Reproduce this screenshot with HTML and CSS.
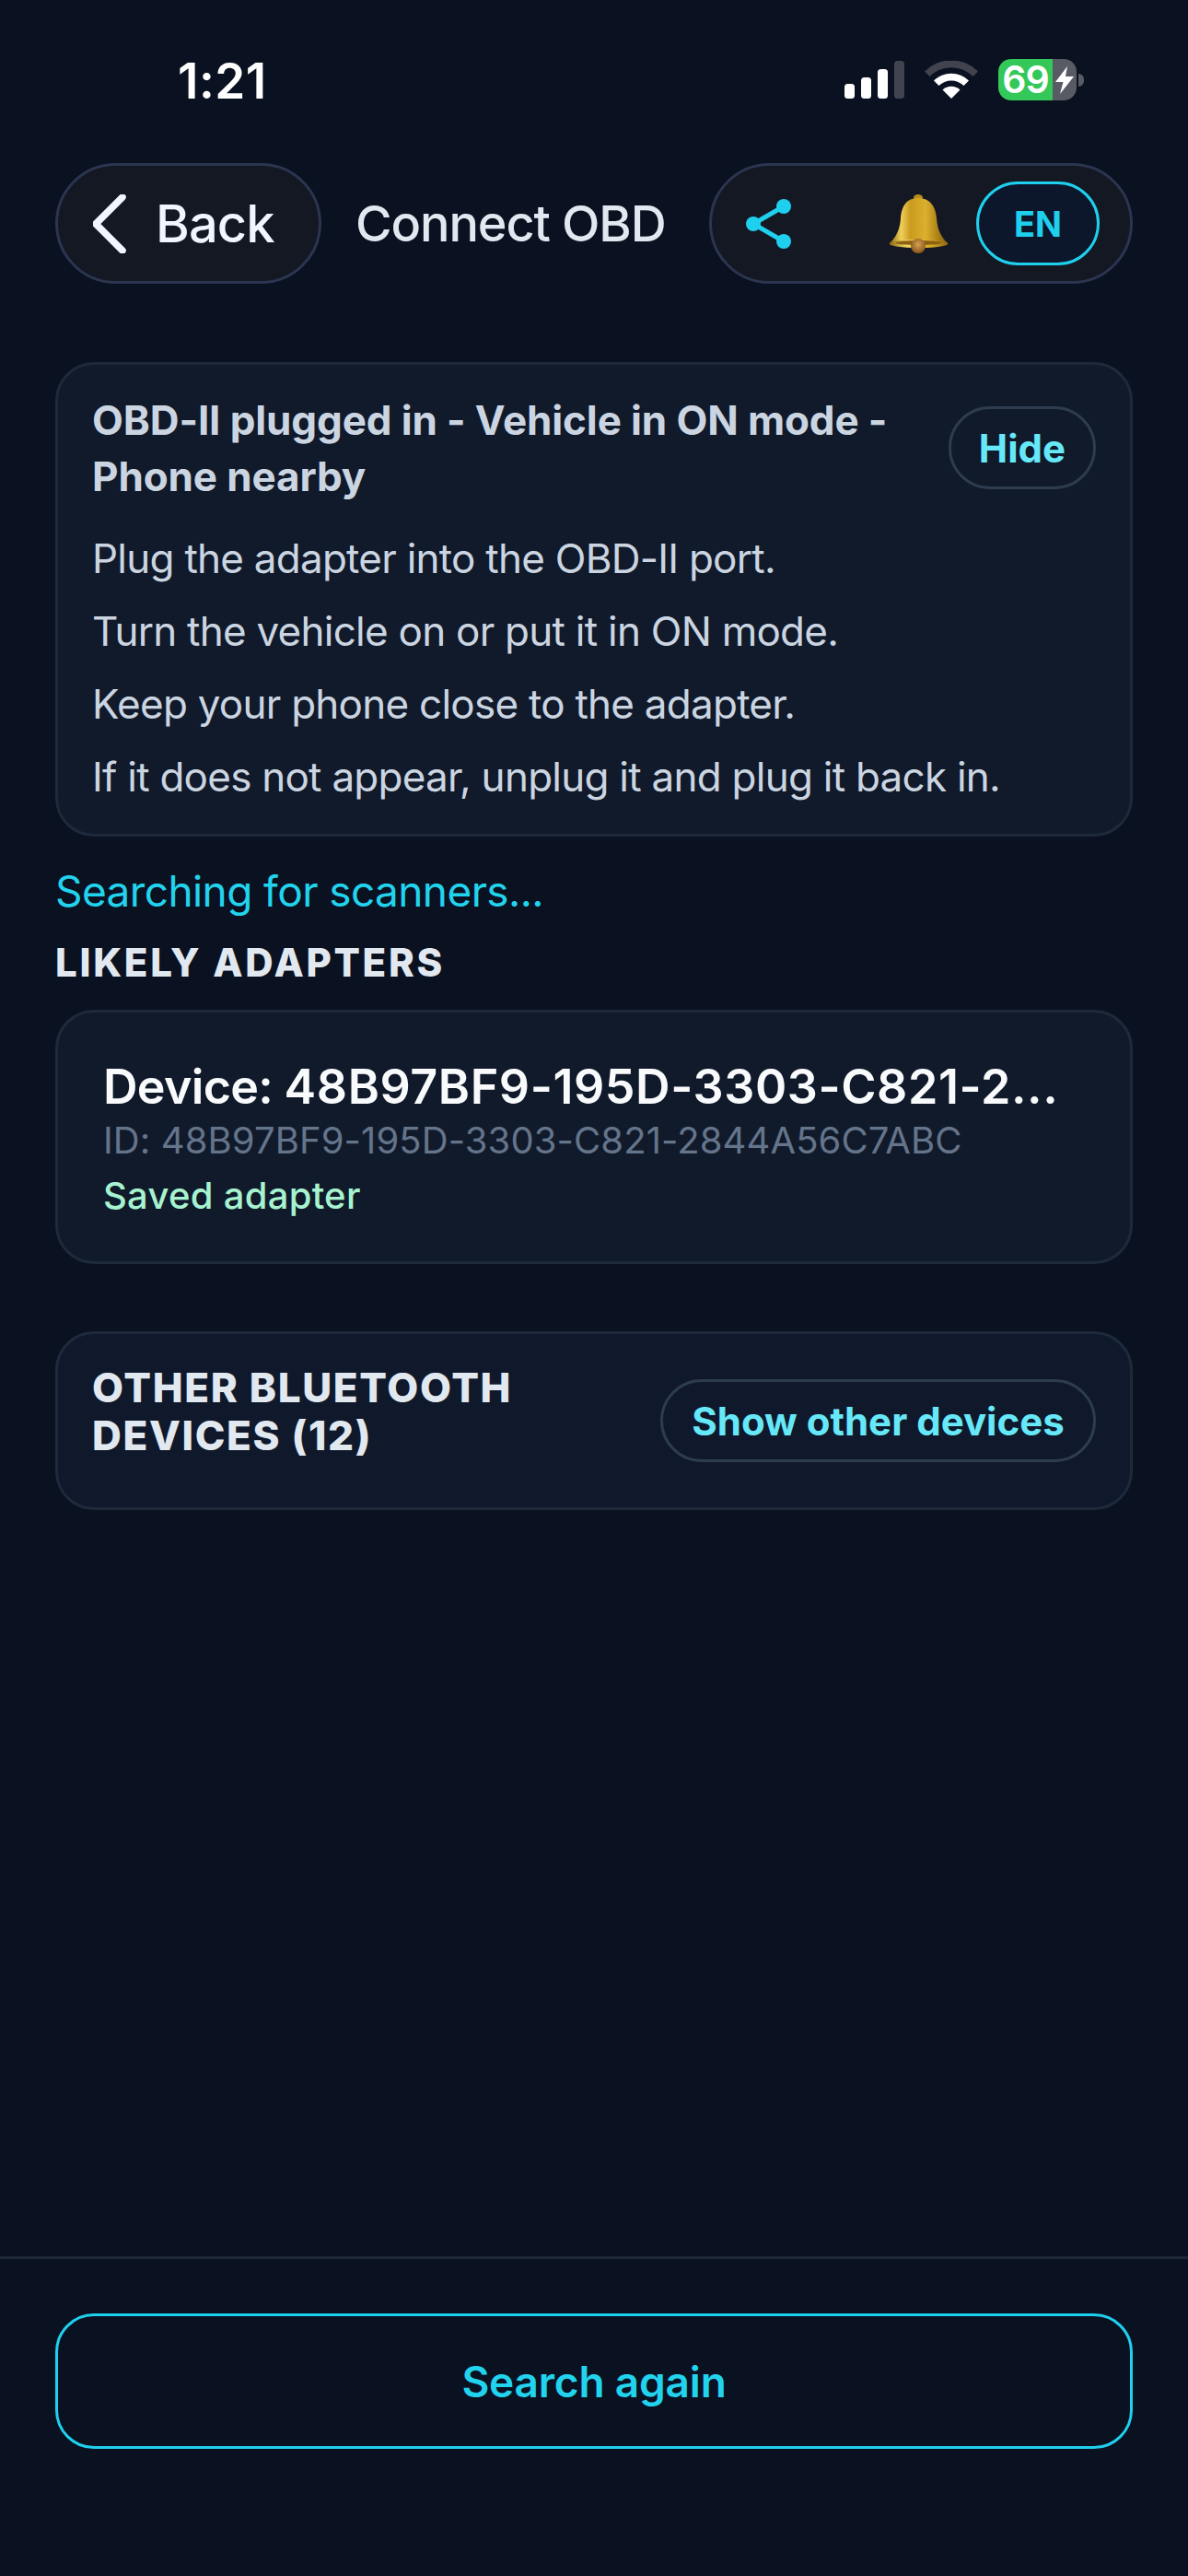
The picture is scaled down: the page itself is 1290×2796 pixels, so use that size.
FILE: index.html
```html
<!DOCTYPE html>
<html lang="en">
<head>
  <meta charset="UTF-8">
  <title>Connect OBD</title>
  <link rel="stylesheet" href="styles.css">
</head>
<body>
  <div class="status-bar">
    <span class="time">1:21</span>
    <div class="status-icons">
      <svg class="signal" width="65" height="41" viewBox="0 0 65 41">
        <rect x="0" y="25" width="11" height="16" rx="3.5" fill="#fff"/>
        <rect x="18" y="18" width="11" height="23" rx="3.5" fill="#fff"/>
        <rect x="36" y="9" width="11" height="32" rx="3.5" fill="#fff"/>
        <rect x="54" y="0" width="11" height="41" rx="3.5" fill="#41444e"/>
      </svg>
      <svg class="wifi" width="58" height="41" viewBox="0 0 58 41">
        <path d="M29 41 L19.500 31.500 A14 14 0 0 1 38.500 31.500 Z" fill="#fff"/>
        <path d="M10 21.500 A27 27 0 0 1 48 21.500 L42.500 27 A19.500 19.500 0 0 0 15.500 27 Z" fill="#fff"/>
        <path d="M0 11.500 A41 41 0 0 1 58 11.500 L52.500 17 A33 33 0 0 0 5.500 17 Z" fill="#41444e"/>
      </svg>
      <div class="battery">
        <div class="battery-body">
          <span class="battery-level">69</span>
          <span class="battery-rest">
            <svg width="21" height="30" viewBox="0 0 21 30"><path d="M13 0 L0 17 L8.500 17 L5 30 L20 11 L11 11 Z" fill="#fff"/></svg>
          </span>
        </div>
        <span class="battery-cap"></span>
      </div>
    </div>
  </div>

  <header class="top-bar">
    <button class="back-btn">
      <svg width="36" height="64" viewBox="0 0 36 64"><path d="M32 3 L3 32 L32 61" fill="none" stroke="#f1f5ff" stroke-width="7.5" stroke-linecap="round" stroke-linejoin="round"/></svg>
      <span>Back</span>
    </button>
    <h1 class="page-title">Connect OBD</h1>
    <div class="actions">
      <svg class="share-icon" width="52" height="56" viewBox="0 0 52 56">
        <path d="M42 9 L9 28 L42 47" fill="none" stroke="#1fd0ee" stroke-width="5"/>
        <circle cx="42" cy="9" r="8" fill="#1fd0ee"/>
        <circle cx="9" cy="28" r="8" fill="#1fd0ee"/>
        <circle cx="42" cy="47" r="8" fill="#1fd0ee"/>
      </svg>
      <svg class="bell-icon" width="66" height="64" viewBox="0 0 66 64">
        <defs>
          <linearGradient id="bellBody" x1="0" y1="0" x2="1" y2="0">
            <stop offset="0" stop-color="#8f6a12"/>
            <stop offset="0.2" stop-color="#f0cf5a"/>
            <stop offset="0.36" stop-color="#c99a1e"/>
            <stop offset="0.62" stop-color="#dcb02e"/>
            <stop offset="0.85" stop-color="#a97e14"/>
            <stop offset="1" stop-color="#7e5a0e"/>
          </linearGradient>
          <linearGradient id="bellRim" x1="0" y1="0" x2="1" y2="0">
            <stop offset="0" stop-color="#8a6410"/>
            <stop offset="0.3" stop-color="#f2d760"/>
            <stop offset="0.7" stop-color="#d8ad24"/>
            <stop offset="1" stop-color="#8a6410"/>
          </linearGradient>
          <radialGradient id="bellClapper" cx="0.5" cy="0.4" r="0.6">
            <stop offset="0" stop-color="#d6a050"/>
            <stop offset="1" stop-color="#85551a"/>
          </radialGradient>
        </defs>
        <ellipse cx="32" cy="3.500" rx="5" ry="3.500" fill="#b88c1c"/>
        <path d="M32 4 C19 4 14 13 13 26 C12 39 8 46 1 53 L64 53 C57 46 53 39 52 26 C51 13 45 4 32 4 Z" fill="url(#bellBody)"/>
        <ellipse cx="32.500" cy="53.500" rx="32" ry="4.500" fill="url(#bellRim)"/>
        <ellipse cx="32.500" cy="52.500" rx="25" ry="2.500" fill="#8c5f12"/>
        <circle cx="32" cy="56" r="8" fill="url(#bellClapper)"/>
      </svg>
      <button class="lang-btn">EN</button>
    </div>
  </header>

  <main class="content">
    <section class="card tips">
      <div class="tips-head">
        <h2 class="tips-title">OBD-II plugged in - Vehicle in ON mode - Phone nearby</h2>
        <button class="ghost-btn hide-btn">Hide</button>
      </div>
      <ul class="tips-list">
        <li>Plug the adapter into the OBD-II port.</li>
        <li>Turn the vehicle on or put it in ON mode.</li>
        <li>Keep your phone close to the adapter.</li>
        <li>If it does not appear, unplug it and plug it back in.</li>
      </ul>
    </section>

    <p class="searching">Searching for scanners...</p>
    <h3 class="section-label">LIKELY ADAPTERS</h3>

    <section class="card device">
      <div class="device-name"><span class="device-prefix">Device: </span>48B97BF9-195D-3303-C821-2...</div>
      <div class="device-id">ID: 48B97BF9-195D-3303-C821-2844A56C7ABC</div>
      <div class="device-note">Saved adapter</div>
    </section>

    <section class="card others">
      <h3 class="others-title">OTHER BLUETOOTH DEVICES (12)</h3>
      <button class="ghost-btn show-btn">Show other devices</button>
    </section>
  </main>

  <footer class="bottom-bar">
    <button class="search-btn">Search again</button>
  </footer>
</body>
</html>
```

FILE: styles.css
```css
* {
  box-sizing: border-box;
}

html, body {
  height: 100%;
}

body {
  margin: 0;
  width: 1290px;
  height: 2796px;
  display: flex;
  flex-direction: column;
  background-color: #0a1120;
  font-family: 'Inter', 'Liberation Sans', sans-serif;
  color: #cbd5e1;
}

button {
  font-family: inherit;
  cursor: pointer;
}

/* status bar */
.status-bar {
  height: 177px;
  padding: 64px 113px 0 193px;
  display: flex;
  justify-content: space-between;
  align-items: flex-start;
}

.time {
  font-size: 53px;
  font-weight: 600;
  line-height: 48px;
  letter-spacing: 0.5px;
  color: #fff;
}

.status-icons {
  display: flex;
  align-items: flex-start;
  gap: 22px;
}

.signal, .wifi {
  margin-top: 2px;
}

.battery {
  display: flex;
  align-items: center;
}

.battery-body {
  width: 85px;
  height: 45px;
  display: flex;
}

.battery-level {
  width: 59px;
  border-radius: 14px 0 0 14px;
  background-color: #34c759;
  color: #fff;
  font-size: 41px;
  font-weight: 600;
  line-height: 45px;
  letter-spacing: -1px;
  text-align: center;
}

.battery-rest {
  flex: 1;
  display: flex;
  align-items: center;
  justify-content: center;
  border-radius: 0 14px 14px 0;
  background-color: #585b64;
}

.battery-cap {
  width: 6px;
  height: 14px;
  margin-left: 2px;
  border-radius: 0 7px 7px 0;
  background-color: #585b64;
}

/* top bar */
.top-bar {
  display: flex;
  align-items: center;
  height: 131px;
  padding: 0 60px;
}

.back-btn {
  width: 289px;
  height: 131px;
  display: flex;
  align-items: center;
  gap: 32px;
  padding: 0 0 0 38px;
  border: 3px solid #2b3550;
  border-radius: 66px;
  background-color: #141823;
  color: #f1f5ff;
  font-size: 56px;
  font-weight: 500;
  letter-spacing: -0.9px;
}

.page-title {
  margin: 0 0 0 37px;
  flex: 1;
  font-size: 54px;
  font-weight: 500;
  letter-spacing: -1.1px;
  color: #e2e8f0;
  white-space: nowrap;
}

.actions {
  width: 460px;
  height: 131px;
  display: flex;
  align-items: center;
  padding-left: 36px;
  border: 3px solid #2b3550;
  border-radius: 66px;
  background-color: #141823;
}

.bell-icon {
  margin-left: 104px;
}

.lang-btn {
  width: 134px;
  height: 91px;
  margin-left: 29px;
  border: 3px solid #1fd0ee;
  border-radius: 46px;
  background-color: #0c172b;
  color: #1fd0ee;
  font-size: 38px;
  font-weight: 700;
}

/* content */
.content {
  flex: 1;
  padding: 85px 60px 0;
}

.card {
  border: 3px solid #1e2a3c;
  border-radius: 42px;
  background-color: #111a2a;
}

.tips {
  height: 515px;
  padding: 30px 37px;
}

.tips-head {
  display: flex;
  align-items: flex-start;
  justify-content: space-between;
}

.tips-title {
  margin: 0;
  width: 880px;
  font-size: 44px;
  font-weight: 700;
  line-height: 61px;
  letter-spacing: -0.12px;
}

.ghost-btn {
  height: 90px;
  border: 3px solid #2e3c50;
  border-radius: 45px;
  background: transparent;
  color: #67e8f9;
  font-size: 42px;
  font-weight: 700;
  white-space: nowrap;
}

.hide-btn {
  width: 160px;
  margin-top: 15px;
  padding: 0;
}

.tips-list {
  list-style: none;
  margin: 28px 0 0;
  padding: 0;
}

.tips-list li {
  height: 79px;
  font-size: 44px;
  line-height: 60px;
  letter-spacing: -0.75px;
}

.searching {
  margin: 30px 0 0;
  font-size: 46px;
  line-height: 58px;
  letter-spacing: -0.6px;
  color: #22d3ee;
}

.section-label {
  margin: 23px 0 0;
  font-size: 42px;
  font-weight: 800;
  line-height: 52px;
  letter-spacing: 2.7px;
  color: #e2e8f0;
}

.device {
  height: 276px;
  margin-top: 25px;
  padding: 47px 49px 0;
}

.device-name {
  font-size: 52px;
  font-weight: 600;
  line-height: 68px;
  letter-spacing: 0.57px;
  color: #f8fafc;
  white-space: nowrap;
}

.device-prefix {
  letter-spacing: -0.7px;
}

.device-id {
  font-size: 40px;
  line-height: 48px;
  letter-spacing: 0.1px;
  color: #64748b;
  white-space: nowrap;
}

.device-note {
  margin-top: 12px;
  font-size: 40px;
  font-weight: 500;
  line-height: 48px;
  letter-spacing: 0.27px;
  color: #a7f3d0;
}

.others {
  height: 194px;
  margin-top: 73px;
  padding: 0 37px;
  display: flex;
  align-items: center;
  justify-content: space-between;
  background-color: #0f192b;
}

.others-title {
  margin: 0 0 21px;
  width: 520px;
  font-size: 44px;
  font-weight: 800;
  line-height: 52px;
  letter-spacing: 1.65px;
  color: #e2e8f0;
}

.show-btn {
  width: 473px;
  padding: 0;
}

/* bottom button */
.bottom-bar {
  height: 347px;
  padding: 59px 60px 0;
  border-top: 3px solid #1f2838;
}

.search-btn {
  width: 100%;
  height: 147px;
  border: 3px solid #1fd0ee;
  border-radius: 42px;
  background: transparent;
  color: #22d3ee;
  font-size: 46px;
  font-weight: 600;
  letter-spacing: -0.2px;
}
```
